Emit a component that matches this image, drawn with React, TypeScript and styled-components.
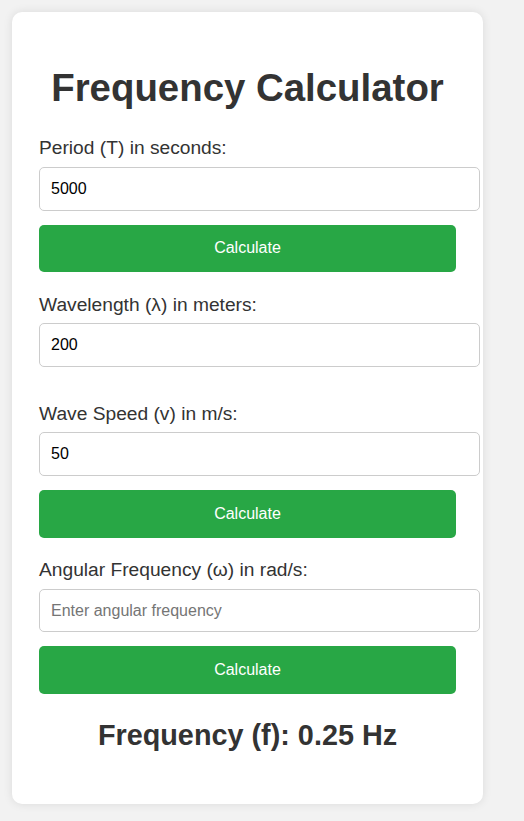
import React, { useState } from "react";
import styled, { createGlobalStyle } from "styled-components";

const GlobalStyle = createGlobalStyle`
  html, body {
    margin: 0;
    padding: 0;
    background: #f2f2f2;
  }
  body {
    padding: 12px;
    font-family: "Liberation Sans", Arial, sans-serif;
    color: #333;
  }
  * { box-sizing: border-box; }
`;

const Card = styled.div`
  width: 471px;
  background: #ffffff;
  border-radius: 10px;
  box-shadow: 0 0 10px rgba(0, 0, 0, 0.1);
  padding: 27px;
  display: flex;
  flex-direction: column;
`;

const Title = styled.h1`
  margin: 26.5px 0 27.7px;
  font-size: 38.4px;
  font-weight: 700;
  line-height: normal;
  text-align: center;
  color: #333;
`;

const Group = styled.div`
  display: flex;
  flex-direction: column;
  align-items: flex-start;
  margin-bottom: 21.5px;
`;

const Label = styled.label`
  display: block;
  font-size: 19.2px;
  line-height: normal;
  color: #333;
  margin-bottom: 7.8px;
`;

const Input = styled.input`
  width: calc(100% + 24px);
  height: 43.6px;
  padding: 0 11px;
  margin: 0 0 14px;
  border: 1px solid #ccc;
  border-radius: 5px;
  background: #fff;
  font-family: "Liberation Sans", Arial, sans-serif;
  font-size: 16px;
  color: #000;
  outline: none;

  &::placeholder {
    color: #757575;
  }
`;

const Button = styled.button`
  width: 100%;
  height: 47.6px;
  border: none;
  border-radius: 5px;
  background: #28a745;
  color: #fff;
  font-family: "Liberation Sans", Arial, sans-serif;
  font-size: 16px;
  cursor: pointer;
`;

const Result = styled.h2`
  margin: 3.4px 0 25px;
  font-size: 28.8px;
  font-weight: 700;
  line-height: normal;
  text-align: center;
  color: #333;
`;

export default function App() {
  const [period, setPeriod] = useState("5000");
  const [wavelength, setWavelength] = useState("200");
  const [speed, setSpeed] = useState("50");
  const [omega, setOmega] = useState("");
  const [result, setResult] = useState("Frequency (f): 0.25 Hz");

  const fromPeriod = () => {
    const t = parseFloat(period);
    if (t > 0) setResult(`Frequency (f): ${(1 / t).toPrecision(3)} Hz`);
  };
  const fromWave = () => {
    const l = parseFloat(wavelength);
    const v = parseFloat(speed);
    if (l > 0) setResult(`Frequency (f): ${v / l} Hz`);
  };
  const fromOmega = () => {
    const w = parseFloat(omega);
    if (!isNaN(w)) setResult(`Frequency (f): ${(w / (2 * Math.PI)).toFixed(2)} Hz`);
  };

  return (
    <>
      <GlobalStyle />
      <Card>
        <Title>Frequency Calculator</Title>

        <Group>
          <Label>Period (T) in seconds:</Label>
          <Input value={period} onChange={(e) => setPeriod(e.target.value)} />
          <Button onClick={fromPeriod}>Calculate</Button>
        </Group>

        <Group>
          <Label>Wavelength (λ) in meters:</Label>
          <Input value={wavelength} onChange={(e) => setWavelength(e.target.value)} />
        </Group>

        <Group>
          <Label>Wave Speed (v) in m/s:</Label>
          <Input value={speed} onChange={(e) => setSpeed(e.target.value)} />
          <Button onClick={fromWave}>Calculate</Button>
        </Group>

        <Group>
          <Label>Angular Frequency (ω) in rad/s:</Label>
          <Input
            placeholder="Enter angular frequency"
            value={omega}
            onChange={(e) => setOmega(e.target.value)}
          />
          <Button onClick={fromOmega}>Calculate</Button>
        </Group>

        <Result>{result}</Result>
      </Card>
    </>
  );
}
